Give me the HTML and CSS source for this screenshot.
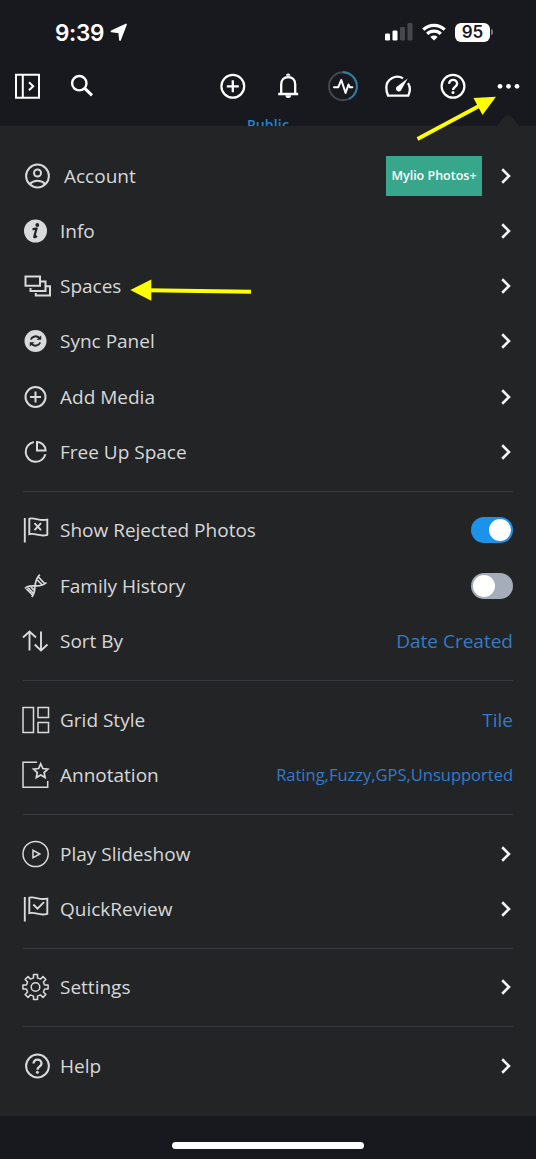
FILE: index.html
```html
<!DOCTYPE html>
<html lang="en">
<head>
<meta charset="utf-8">
<title>Menu</title>
<link rel="stylesheet" href="styles.css">
</head>
<body>
<div class="screen">
<header class="status">
  <span class="clock">9:39</span>
  <svg class="location" viewBox="0 0 18 18"><path d="M16 1.500 1.500 8.300l7.700 1 .8 7.700z" fill="#fff" stroke="#fff" stroke-width="1.800" stroke-linejoin="round"/></svg>
  <span class="spacer"></span>
  <svg class="signal" viewBox="0 0 28 18"><g fill="#fff"><rect x="0" y="10.500" width="5" height="7" rx="1.300"/><rect x="7.500" y="7.500" width="5" height="10" rx="1.300"/></g><g fill="#46474c"><rect x="15" y="4" width="5" height="13.500" rx="1.300"/><rect x="22.500" y="0" width="5" height="17.500" rx="1.300"/></g></svg>
  <svg class="wifi" viewBox="0 0 24 18"><g fill="none" stroke="#fff" stroke-width="3.200"><path d="M1.300 6.700a15.200 15.200 0 0 1 21.400 0"/><path d="M5.200 10.900a9.700 9.700 0 0 1 13.600 0"/></g><path d="M12 17.500 8.400 14a5.100 5.100 0 0 1 7.200 0z" fill="#fff"/></svg>
  <span class="battery">95</span><span class="battery-tip"></span>
</header>
<nav class="toolbar">
  <svg class="tool" viewBox="0 0 55 55"><path d="M16 15.800h23v23H16zM22.800 15.800v23M29 23.300l4.200 4-4.200 4"/></svg>
  <svg class="tool" viewBox="0 0 55 55"><g stroke-width="2.400"><circle cx="24.300" cy="24.200" r="7.200"/><path d="M29.500 29.200l7.500 7.200" stroke-width="3"/></g></svg>
  <span class="spacer"></span>
  <svg class="tool" viewBox="0 0 55 55"><circle cx="26.800" cy="27.300" r="11.400" stroke-width="2.200"/><path d="M26.800 21.300v12M20.800 27.300h12" stroke-width="2.300"/></svg>
  <svg class="tool" viewBox="0 0 55 55"><g stroke-width="2.300"><path d="M17.200 35h20M20.200 34.500v-9c0-4.500 2.800-7.300 7-7.300s7 2.800 7 7.300v9"/></g><path d="M26 16.800a1.200 1.200 0 0 1 2.400 0"/><path d="M25.500 37.300h3.500c0 1-3.500 1-3.500 0z"/></svg>
  <svg class="tool" viewBox="0 0 55 55"><circle cx="27" cy="27.300" r="14" stroke="#45484d" stroke-width="1.900"/><path d="M27 13.300a14 14 0 0 1 6 26.600" stroke="#2a7fa3" stroke-width="1.900"/><path d="M18 28.200h4.300l3-7.200 4.300 13 2.900-8.500 1.300 2.700h2.500" stroke-linejoin="round" stroke-linecap="round"/></svg>
  <svg class="tool" viewBox="0 0 55 55"><path d="M32 19.200c-7.500-4-16.700.8-16.700 9.400 0 3.200.6 5.600 1.700 8h20.300c1.900-4 2.300-8.500-.3-12.400" stroke-width="2.300"/><path d="M36.700 19.500 30 31.500c-1.900 2.800-6.500-.3-4.500-3.500z" fill="#fff" stroke="none"/></svg>
  <svg class="tool" viewBox="0 0 55 55"><circle cx="27" cy="27.300" r="11.400" stroke-width="2.200"/><path d="M23.100 24.800c0-5.300 8-5.200 8 0 0 3-4.100 3.200-4.100 6.200" stroke-width="2.400"/><circle cx="27" cy="33.600" r="1.500" fill="#fff" stroke="none"/></svg>
  <svg class="tool" viewBox="0 0 55 55"><g fill="#fff" stroke="none"><circle cx="19" cy="27.300" r="2.400"/><circle cx="27.500" cy="27.300" r="2.400"/><circle cx="36" cy="27.300" r="2.400"/></g></svg>
</nav>
<div class="behind">Public</div>
<main class="menu">
  <div class="row"><svg class="icon" viewBox="0 0 40 40"><circle cx="17.500" cy="20" r="11.400"/><circle cx="17.500" cy="17" r="3.500"/><path d="M9.700 28c4.300-4.300 11.300-4.300 15.600 0"/></svg><span class="label indent">Account</span><span class="plan">Mylio Photos+</span><svg class="chevron" viewBox="0 0 12 16"><path d="M2.200 1.300 9 8l-6.800 6.700"/></svg></div>
  <div class="row"><svg class="icon" viewBox="0 0 40 40"><circle cx="15.500" cy="20" r="11.500" class="solid"/><circle cx="17.300" cy="14" r="1.900" class="cut"/><path d="M12.500 18.200c1.500 0 2.500-.6 4-.5l-2.200 7.800c-.3 1.200 1.100.8 2.500-.8" stroke="#232426" stroke-width="2.200"/></svg><span class="label">Info</span><svg class="chevron" viewBox="0 0 12 16"><path d="M2.200 1.300 9 8l-6.800 6.700"/></svg></div>
  <div class="row"><svg class="icon" viewBox="0 0 40 40"><path d="M5.500 10.500h14.500v9.200H5.500zM20.500 15.500h5v9.500H10.500v-3M25.500 20.300h4.500v9.200H15.800V27"/></svg><span class="label">Spaces</span><svg class="chevron" viewBox="0 0 12 16"><path d="M2.200 1.300 9 8l-6.800 6.700"/></svg></div>
  <div class="row"><svg class="icon" viewBox="0 0 40 40"><circle cx="15.500" cy="20" r="11" class="solid"/><g stroke="#232426" stroke-width="2"><path d="M10.800 18.500c1.300-3.400 6-4.300 8.800-1.300M20.200 21.500c-1.300 3.400-6 4.300-8.800 1.300"/></g><path d="M16.500 18.800h4.700v-4.300zM14.500 21.200H9.800v4.300z" class="cut"/></svg><span class="label">Sync Panel</span><svg class="chevron" viewBox="0 0 12 16"><path d="M2.200 1.300 9 8l-6.800 6.700"/></svg></div>
  <div class="row"><svg class="icon" viewBox="0 0 40 40"><circle cx="15.500" cy="20" r="10"/><path d="M15.500 14.500v11M10 20h11"/></svg><span class="label">Add Media</span><svg class="chevron" viewBox="0 0 12 16"><path d="M2.200 1.300 9 8l-6.800 6.700"/></svg></div>
  <div class="row"><svg class="icon" viewBox="0 0 40 40"><path d="M13.800 10a10 10 0 1 0 11.600 12.200M17 10v8.500h8.600c-.1-4.700-3.900-8.400-8.600-8.500z"/></svg><span class="label">Free Up Space</span><svg class="chevron" viewBox="0 0 12 16"><path d="M2.200 1.300 9 8l-6.800 6.700"/></svg></div>
  <hr class="rule">
  <div class="row"><svg class="icon" viewBox="0 0 40 40"><path d="M4.800 8v24.500" stroke-width="1.900"/><path d="M9.300 8.700c5.500-1.700 9.200 2.700 18 .9v15.200c-8 2.600-11.500-2.300-18-.6zM14.500 13.200l6.500 7M21 13.200l-6.500 7" stroke-width="1.900"/></svg><span class="label">Show Rejected Photos</span><span class="switch on"></span></div>
  <div class="row"><svg class="icon" viewBox="0 0 40 40"><path d="M5 22.500c5-6.500 14 1.500 21.500-6M11.800 31c5.800-6 0-15 8-22.300M8.200 21.800l5.500 6M11 20.800l3.700 4M17.300 14l4.500 4.500M18.500 11l6 6.500M6.500 22.800l6 6.200" stroke-width="1.700"/></svg><span class="label">Family History</span><span class="switch"></span></div>
  <div class="row"><svg class="icon" viewBox="0 0 40 40"><path d="M9.500 29.500V11M3 16.500l6.500-6 6.500 6M21 10.500V29M14.700 23.500l6.300 6 6.500-6" stroke-width="1.900"/></svg><span class="label">Sort By</span><span class="value">Date Created</span></div>
  <hr class="rule">
  <div class="row"><svg class="icon" viewBox="0 0 40 40"><path d="M3 7.500h10.500v25H3zM18 7.500h10.500v10H18zM18 22.500h10.500v10H18z" stroke-width="1.500"/></svg><span class="label">Grid Style</span><span class="value">Tile</span></div>
  <div class="row"><svg class="icon" viewBox="0 0 40 40"><path d="M17 7.300H3v25h24.700V26" stroke-width="1.500"/><path d="M20.700 8.800l2.100 4.700 5 .6-3.700 3.400 1 5-4.400-2.500-4.400 2.500 1-5-3.700-3.400 5-.6z" stroke-width="1.700"/></svg><span class="label">Annotation</span><span class="value small">Rating,Fuzzy,GPS,Unsupported</span></div>
  <hr class="rule">
  <div class="row"><svg class="icon" viewBox="0 0 40 40"><circle cx="15.600" cy="20" r="12.600" stroke-width="1.500"/><path d="M13 16.300v7.400l6.800-3.700z" stroke-width="1.500"/></svg><span class="label">Play Slideshow</span><svg class="chevron" viewBox="0 0 12 16"><path d="M2.200 1.300 9 8l-6.800 6.700"/></svg></div>
  <div class="row"><svg class="icon" viewBox="0 0 40 40"><path d="M4.800 8v24.500" stroke-width="1.900"/><path d="M9.300 8.700c5.500-1.700 9.200 2.700 18 .9v15.200c-8 2.600-11.500-2.300-18-.6zM13.300 15.500l4.200 4.200 6.500-6.500" stroke-width="1.900"/></svg><span class="label">QuickReview</span><svg class="chevron" viewBox="0 0 12 16"><path d="M2.200 1.300 9 8l-6.800 6.700"/></svg></div>
  <hr class="rule">
  <div class="row"><svg class="icon" viewBox="0 0 40 40"><g stroke-width="1.500"><circle cx="15.500" cy="20" r="4.300"/><path d="M13.500 7.400h4v3.500l3 1.200 2.500-2.500 2.900 2.900-2.500 2.500 1.200 3h3.500v4h-3.500l-1.200 3 2.500 2.500-2.900 2.900-2.500-2.500-3 1.200v3.500h-4v-3.500l-3-1.200L8 30.400l-2.900-2.900L7.600 25l-1.200-3H2.900v-4h3.500l1.200-3-2.500-2.500L8 9.600l2.500 2.500 3-1.200z" stroke-linejoin="round"/></g></svg><span class="label">Settings</span><svg class="chevron" viewBox="0 0 12 16"><path d="M2.200 1.300 9 8l-6.800 6.700"/></svg></div>
  <hr class="rule">
  <div class="row"><svg class="icon" viewBox="0 0 40 40"><circle cx="17.500" cy="20" r="11.400"/><path d="M13.500 17.500c0-5.300 8-5.200 8 0 0 3-4.100 3.200-4.100 6.200" stroke-width="2.300"/><circle cx="17.400" cy="26.300" r="1.500" class="solid"/></svg><span class="label">Help</span><svg class="chevron" viewBox="0 0 12 16"><path d="M2.200 1.300 9 8l-6.800 6.700"/></svg></div>
</main>
<footer class="bottom"><span class="home"></span></footer>
<svg class="overlay" viewBox="0 0 536 1159"><path d="M496 126.500 506 115.500q2-1.800 4 0l10 11z" fill="#232426"/><g fill="#ff0"><path d="M417.500 139 480 105.500" stroke="#ff0" stroke-width="3.800"/><path d="M496 96.700 473.500 98 482.500 115z"/><path d="M251 291.700 148 290.300" stroke="#ff0" stroke-width="4"/><path d="M130.300 290 151.300 279.500v21.300z"/></g></svg>
</div>
</body>
</html>
```
FILE: styles.css
```css
* { box-sizing: border-box; }
body { margin: 0; background: #18191f; font-family: "Open Sans", "Noto Sans", sans-serif; }
.screen { position: relative; width: 536px; height: 1159px; overflow: hidden; display: flex; flex-direction: column; }
.status { height: 59px; padding: 5px 43px 0 55px; display: flex; align-items: center; }
.clock { font: 600 22.5px Inter, sans-serif; letter-spacing: -.3px; color: #fff; }
.location { width: 18px; height: 18px; margin-left: 6px; }
.spacer { flex: 1; }
.signal { width: 28px; height: 18px; }
.wifi { width: 24px; height: 18px; margin: 0 9px 0 9px; }
.battery { width: 35px; height: 19px; border-radius: 6px; background: #fff; color: #18191f; font: 600 17px/19px Inter, sans-serif; text-align: center; }
.battery-tip { width: 2px; height: 6px; margin-left: 1px; border-radius: 0 2px 2px 0; background: #77787c; }
.toolbar { height: 55px; display: flex; }
.tool { width: 55px; height: 55px; fill: none; stroke: #fff; stroke-width: 2; }
.behind { height: 12px; overflow: hidden; text-align: center; font-size: 14px; line-height: 22px; font-weight: 600; letter-spacing: .2px; color: #2485d0; }
.menu { height: 990px; padding: 22.600px 23px 0 20px; background: #232426; }
.row { height: 55.100px; display: flex; align-items: center; }
.icon { width: 40px; height: 40px; flex: none; fill: none; stroke: #d9dadb; stroke-width: 2; }
.solid { fill: #d9dadb; stroke: none; }
.cut { fill: #232426; stroke: none; }
.label { margin-right: auto; font-size: 19px; line-height: 28px; color: #d7d8d9; white-space: nowrap; }
.indent { padding-left: 4px; }
.plan { width: 96px; height: 40px; margin-right: 18px; background: #38a68b; color: #fff; font-size: 12.500px; line-height: 40px; font-weight: 600; text-align: center; white-space: nowrap; }
.chevron { width: 12px; height: 16px; margin-right: 1px; fill: none; stroke: #f3f3f3; stroke-width: 2.6; }
.value { font-size: 19px; line-height: 28px; color: #347bc6; white-space: nowrap; }
.small { font-size: 16.500px; }
.rule { height: 1px; margin: 11.400px 0 11.400px 3px; border: 0; background: #3a3b3e; }
.switch { width: 42px; height: 26px; padding: 2px; border-radius: 13px; background: #a5acba; display: flex; }
.switch::before { content: ""; width: 22px; height: 22px; border-radius: 50%; background: #fff; }
.on { background: #1c93ea; justify-content: flex-end; }
.bottom { height: 43px; display: flex; justify-content: center; align-items: flex-start; padding-top: 26px; }
.home { width: 192px; height: 7px; border-radius: 4px; background: #fff; }
.overlay { position: absolute; left: 0; top: 0; width: 536px; height: 1159px; pointer-events: none; }
```
